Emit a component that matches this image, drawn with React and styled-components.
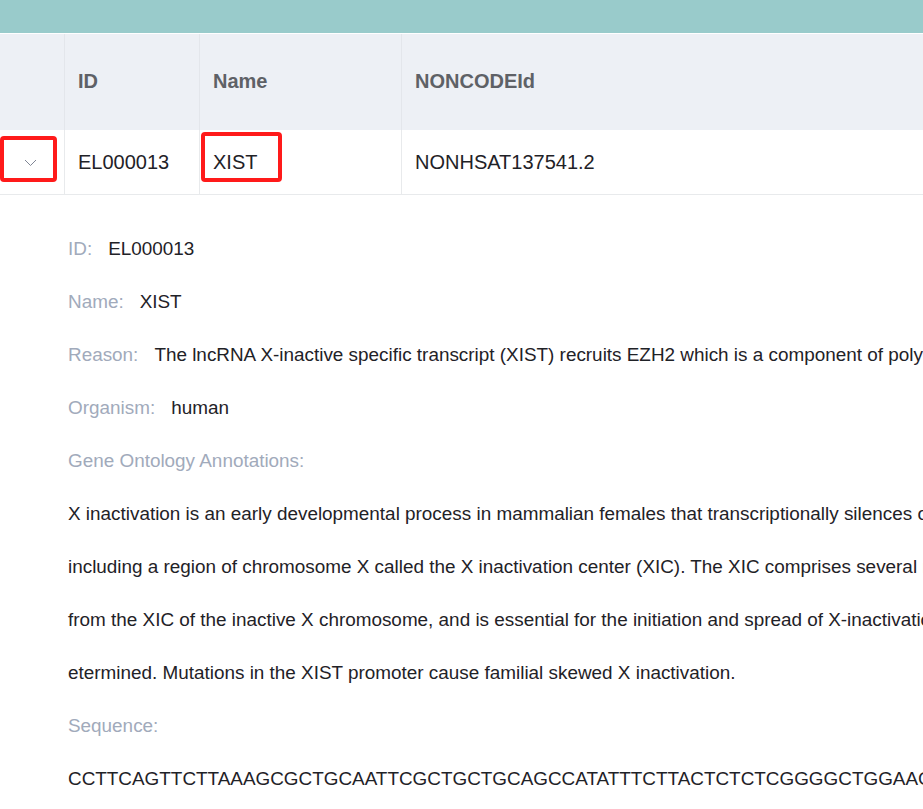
import React from "react";
import styled, { createGlobalStyle } from "styled-components";

const GlobalStyle = createGlobalStyle`
  html, body { margin: 0; padding: 0; background: #fff; }
  body {
    font-family: "Liberation Sans", Arial, sans-serif;
    overflow: hidden;
  }
  * { box-sizing: border-box; }
`;

const Page = styled.div`
  width: 923px;
  overflow: hidden;
  position: relative;
`;

const TopBar = styled.div`
  height: 34px;
  background: #99cbcb;
  border-bottom: 1px solid #ffffff;
`;

const Grid = styled.div`
  display: grid;
  grid-template-columns: 65px 135px 202px 1fr;
  width: 1400px;
`;

const HeaderRow = styled(Grid)`
  height: 96px;
  background: #edf0f5;
`;

const BodyRow = styled(Grid)`
  height: 65px;
  background: #ffffff;
  border-bottom: 1px solid #e8eaec;
`;

const HeadCell = styled.div`
  display: flex;
  align-items: center;
  padding-left: 13px;
  padding-bottom: 1px;
  border-right: 1px solid #e3e6eb;
  font-size: 20px;
  font-weight: bold;
  color: #5e6166;
  white-space: nowrap;
`;

const Cell = styled.div`
  position: relative;
  display: flex;
  align-items: center;
  justify-content: ${(p) => (p.$center ? "center" : "flex-start")};
  padding-left: ${(p) => (p.$center ? "0" : "13px")};
  border-right: 1px solid #e8eaec;
  font-size: 20px;
  color: #1f2227;
  white-space: nowrap;
`;

const Highlight = styled.span`
  position: absolute;
  left: ${(p) => p.$left}px;
  top: ${(p) => p.$top}px;
  width: ${(p) => p.$w}px;
  height: ${(p) => p.$h}px;
  border: 4px solid #ff1a1a;
  border-radius: 4px;
  pointer-events: none;
`;

const Chevron = styled.svg`
  display: block;
  margin-left: -3px;
  margin-top: 2px;
`;

const Detail = styled.div`
  padding: 27px 0 0 68px;
`;

const Line = styled.div`
  height: 53px;
  line-height: 53px;
  font-size: 18.9px;
  color: #1f2227;
  white-space: nowrap;
`;

const Label = styled.span`
  color: #a1aabb;
  margin-right: ${(p) => (p.$bare ? "0" : "16px")};
`;

const goLines = [
  "X inactivation is an early developmental process in mammalian females that transcriptionally silences one of the pair of X chromosomes, thus providing dosage equivalence between males and females. The process is regulated by several factors,",
  "including a region of chromosome X called the X inactivation center (XIC). The XIC comprises several non-coding and protein-coding genes, and this gene was the first non-coding gene identified within the XIC. This gene is expressed exclusively",
  "from the XIC of the inactive X chromosome, and is essential for the initiation and spread of X-inactivation. The transcript is a spliced RNA. Alternatively spliced transcript variants have been identified, but their full length sequences have not been d",
  "etermined. Mutations in the XIST promoter cause familial skewed X inactivation.",
];

export default function App() {
  return (
    <Page>
      <GlobalStyle />
      <TopBar />
      <HeaderRow>
        <HeadCell />
        <HeadCell>ID</HeadCell>
        <HeadCell>Name</HeadCell>
        <HeadCell>NONCODEId</HeadCell>
      </HeaderRow>
      <BodyRow>
        <Cell $center>
          <Chevron width="13" height="8" viewBox="0 0 13 8">
            <path d="M1 1 L6.5 6.5 L12 1" fill="none" stroke="#808695" strokeWidth="1" />
          </Chevron>
          <Highlight $left={0} $top={6} $w={57} $h={46} />
        </Cell>
        <Cell>EL000013</Cell>
        <Cell>
          XIST
          <Highlight $left={1} $top={2} $w={81} $h={50} />
        </Cell>
        <Cell>NONHSAT137541.2</Cell>
      </BodyRow>
      <Detail>
        <Line>
          <Label>ID:</Label>EL000013
        </Line>
        <Line>
          <Label>Name:</Label>XIST
        </Line>
        <Line>
          <Label>Reason:</Label>The lncRNA X-inactive specific transcript (XIST) recruits EZH2 which is a component of polycomb repressive complex 2 (PRC2)
        </Line>
        <Line>
          <Label>Organism:</Label>human
        </Line>
        <Line>
          <Label $bare>Gene Ontology Annotations:</Label>
        </Line>
        {goLines.map((t, i) => (
          <Line key={i}>{t}</Line>
        ))}
        <Line>
          <Label $bare>Sequence:</Label>
        </Line>
        <Line>CCTTCAGTTCTTAAAGCGCTGCAATTCGCTGCTGCAGCCATATTTCTTACTCTCTCGGGGCTGGAAGCTTCCTGACTGAAATCGCTCTTATCCTGA</Line>
      </Detail>
    </Page>
  );
}
